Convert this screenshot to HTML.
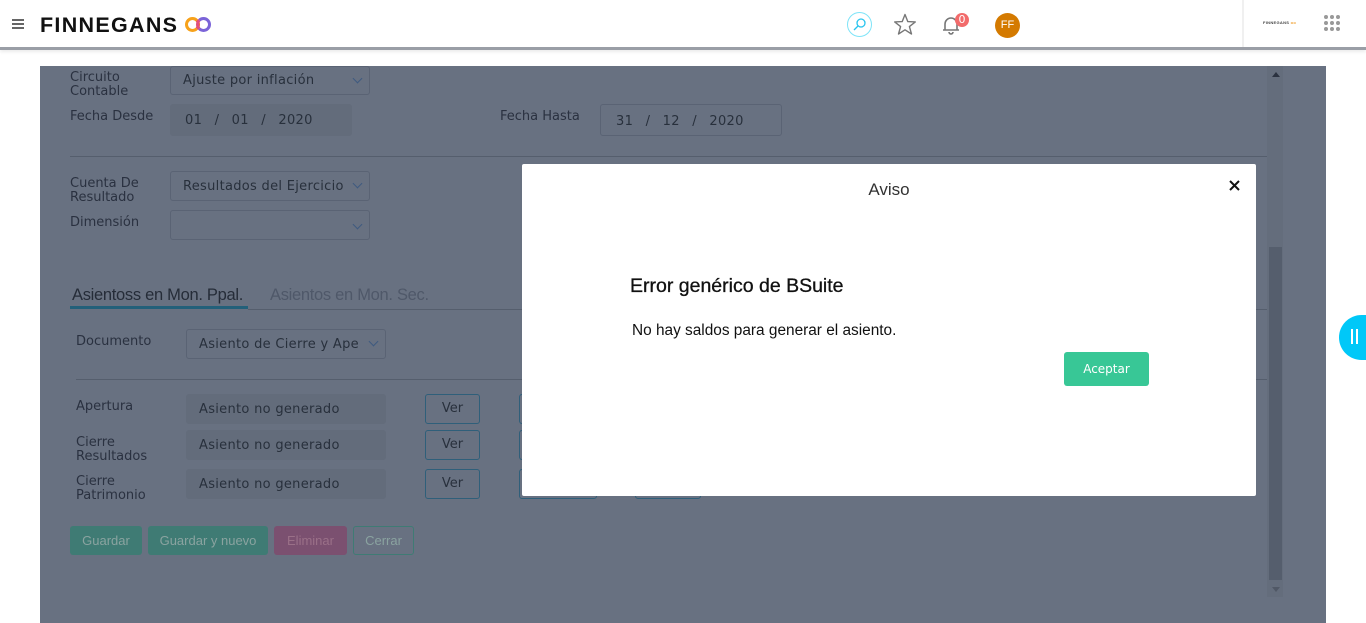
<!DOCTYPE html>
<html><head><meta charset="utf-8"><style>
*{box-sizing:border-box;margin:0;padding:0}
body{width:1366px;height:623px;overflow:hidden;background:#fff;font-family:"DejaVu Sans","Liberation Sans",sans-serif;position:relative}
.a{position:absolute}
.hdr{left:0;top:0;width:1366px;height:50px;background:#fff;border-bottom:3px solid #9a9ea6;box-shadow:0 2px 3px rgba(0,0,0,.08)}
.ov{left:40px;top:66px;width:1286px;height:557px;background:#687181}
.lbl{font-size:13px;color:#2a3140;line-height:14px}
.inp{border:1px solid #5a6374;border-radius:3px;height:30px;font-size:13px;color:#28303c;padding:8px 12px;letter-spacing:.3px}
.fill{background:#636c7b;border:none}
.chev{position:absolute;right:8px;top:8px;width:7px;height:7px;border-right:1.5px solid #3f5a80;border-bottom:1.5px solid #3f5a80;transform:rotate(45deg)}
.ver{border:1.5px solid #2f5f7a;border-radius:3px;width:55px;height:30px;font-size:13px;color:#28303c;text-align:center;line-height:27px}
.btn{height:29px;border-radius:3px;font-size:13px;color:#8aa3a0;text-align:center;line-height:29px;font-family:"Liberation Sans",sans-serif}
.line{height:1px;background:#555e6d}
</style></head><body>
<div class="a hdr">
  <div class="a" style="left:12px;top:19px;width:12px;height:1.5px;background:#666;box-shadow:0 4px 0 #666,0 8px 0 #666"></div>
  <div class="a" style="left:40px;top:12px;font-family:'Liberation Sans',sans-serif;font-weight:bold;font-size:21.5px;letter-spacing:1.3px;color:#111;line-height:26px">FINNEGANS</div>
  <div class="a" style="left:185px;top:17px;width:15px;height:15px;border-radius:50%;border:3.5px solid #f7a21b;border-right-color:#f06a3a"></div>
  <div class="a" style="left:196px;top:17px;width:15px;height:15px;border-radius:50%;border:3.5px solid #7b64d8;border-left-color:#e05080"></div>
  <div class="a" style="left:847px;top:12px;width:25px;height:25px;border-radius:50%;border:1.5px solid #7ee4f8"></div>
  <svg class="a" style="left:851px;top:16px" width="17" height="17" viewBox="0 0 17 17"><circle cx="10" cy="7" r="4" fill="none" stroke="#28c4ee" stroke-width="1.3"/><line x1="7" y1="10" x2="3" y2="14" stroke="#28c4ee" stroke-width="1.3"/></svg>
  <svg class="a" style="left:893px;top:13px" width="24" height="23" viewBox="0 0 24 23"><path d="M12 1.5 L14.8 8.6 L22.3 8.9 L16.4 13.6 L18.5 21 L12 16.8 L5.5 21 L7.6 13.6 L1.7 8.9 L9.2 8.6 Z" fill="none" stroke="#777" stroke-width="1.4" stroke-linejoin="round"/></svg>
  <svg class="a" style="left:940px;top:14px" width="22" height="22" viewBox="0 0 22 22"><path d="M5 16 V10 a6 6 0 0 1 12 0 V16 Z M3 16 H19 M9 18 a2 2 0 0 0 4 0" fill="none" stroke="#777" stroke-width="1.6"/></svg>
  <div class="a" style="left:955px;top:13px;width:14px;height:14px;border-radius:50%;background:#f26b6b;color:#fff;font-size:11px;text-align:center;line-height:14px">0</div>
  <div class="a" style="left:995px;top:13px;width:25px;height:25px;border-radius:50%;background:#d47a00;color:#fff;font-size:11px;text-align:center;line-height:25px;font-family:'Liberation Sans',sans-serif">FF</div>
  <div class="a" style="left:1242px;top:0;width:2px;height:47px;background:#f0f0f0"></div>
  <div class="a" style="left:1263px;top:20px;font-size:4px;font-weight:bold;color:#444;font-family:'Liberation Sans',sans-serif;letter-spacing:.3px">FINNEGANS <span style="color:#f0a030">oo</span></div>
  <svg class="a" style="left:1323px;top:14px" width="18" height="18"><g fill="#999"><circle cx="3" cy="3" r="2"/><circle cx="9" cy="3" r="2"/><circle cx="15" cy="3" r="2"/><circle cx="3" cy="9" r="2"/><circle cx="9" cy="9" r="2"/><circle cx="15" cy="9" r="2"/><circle cx="3" cy="15" r="2"/><circle cx="9" cy="15" r="2"/><circle cx="15" cy="15" r="2"/></g></svg>
</div>

<div class="a ov"></div>
<div class="a" style="left:1267px;top:66px;width:16px;height:531px;background:#646d7c"></div>
<div class="a" style="left:1269px;top:247px;width:13px;height:333px;background:#555e6d"></div>
<div class="a" style="left:1272px;top:72px;width:0;height:0;border-left:4px solid transparent;border-right:4px solid transparent;border-bottom:5px solid #2b3240"></div>
<div class="a" style="left:1272px;top:587px;width:0;height:0;border-left:4px solid transparent;border-right:4px solid transparent;border-top:5px solid #505866"></div>

<div class="a lbl" style="left:70px;top:71px">Circuito<br>Contable</div>
<div class="a inp" style="left:170px;top:66px;width:200px;height:29px;padding-top:6px">Ajuste por inflación<span class="chev"></span></div>
<div class="a lbl" style="left:70px;top:110px">Fecha Desde</div>
<div class="a inp fill" style="left:170px;top:104px;width:182px;height:32px;padding-top:9px;padding-left:15px;word-spacing:8px">01 / 01 / 2020</div>
<div class="a lbl" style="left:500px;top:110px">Fecha Hasta</div>
<div class="a inp" style="left:600px;top:104px;width:182px;height:32px;padding-top:9px;word-spacing:8px;padding-left:15px">31 / 12 / 2020</div>
<div class="a line" style="left:70px;top:156px;width:1197px"></div>
<div class="a lbl" style="left:70px;top:177px">Cuenta De<br>Resultado</div>
<div class="a inp" style="left:170px;top:171px;width:200px;padding-top:7px">Resultados del Ejercicio<span class="chev"></span></div>
<div class="a lbl" style="left:70px;top:216px">Dimensión</div>
<div class="a inp" style="left:170px;top:210px;width:200px"><span class="chev" style="top:10px"></span></div>

<div class="a" style="left:72px;top:286px;font-family:'Liberation Sans',sans-serif;font-size:16.5px;color:#252c38;letter-spacing:-.3px">Asientoss en Mon. Ppal.</div>
<div class="a" style="left:70px;top:306px;width:178px;height:3px;background:#23607a"></div>
<div class="a" style="left:270px;top:286px;font-family:'Liberation Sans',sans-serif;font-size:16.5px;color:#4f5869;letter-spacing:-.3px">Asientos en Mon. Sec.</div>
<div class="a line" style="left:248px;top:309px;width:1019px"></div>

<div class="a lbl" style="left:76px;top:335px">Documento</div>
<div class="a inp" style="left:186px;top:329px;width:200px;padding-top:7px">Asiento de Cierre y Ape<span class="chev"></span></div>
<div class="a line" style="left:76px;top:379px;width:1191px"></div>

<div class="a lbl" style="left:76px;top:400px">Apertura</div>
<div class="a inp fill" style="left:186px;top:394px;width:200px;height:30px;padding-left:13px">Asiento no generado</div>
<div class="a ver" style="left:425px;top:394px">Ver</div>
<div class="a lbl" style="left:76px;top:436px">Cierre<br>Resultados</div>
<div class="a inp fill" style="left:186px;top:430px;width:200px;height:30px;padding-left:13px">Asiento no generado</div>
<div class="a ver" style="left:425px;top:430px">Ver</div>
<div class="a lbl" style="left:76px;top:475px">Cierre<br>Patrimonio</div>
<div class="a inp fill" style="left:186px;top:469px;width:200px;height:30px;padding-left:13px">Asiento no generado</div>
<div class="a ver" style="left:425px;top:469px">Ver</div>
<div class="a ver" style="left:519px;top:394px;width:78px"></div>
<div class="a ver" style="left:519px;top:430px;width:78px"></div>
<div class="a ver" style="left:519px;top:469px;width:78px"></div>
<div class="a ver" style="left:635px;top:469px;width:66px"></div>

<div class="a btn" style="left:70px;top:526px;width:72px;background:#3f7b74">Guardar</div>
<div class="a btn" style="left:148px;top:526px;width:120px;background:#3f7b74">Guardar y nuevo</div>
<div class="a btn" style="left:274px;top:526px;width:73px;background:#7b5070;color:#9a7088">Eliminar</div>
<div class="a btn" style="left:353px;top:526px;width:61px;border:1px solid #3f7b74;line-height:27px">Cerrar</div>

<div class="a" style="left:522px;top:164px;width:734px;height:332px;background:#fff;border-radius:2px">
  <div class="a" style="left:0;top:16px;width:734px;text-align:center;font-family:'Liberation Sans',sans-serif;font-size:17px;color:#333">Aviso</div>
  <svg class="a" style="left:707px;top:16px" width="11" height="11" viewBox="0 0 11 11"><path d="M1 1 L10 10 M10 1 L1 10" stroke="#111" stroke-width="2"/></svg>
  <div class="a" style="left:108px;top:111px;font-family:'Liberation Sans',sans-serif;font-size:19.5px;color:#111;-webkit-text-stroke:.3px #111">Error genérico de BSuite</div>
  <div class="a" style="left:110px;top:158px;font-family:'Liberation Sans',sans-serif;font-size:15.4px;color:#111">No hay saldos para generar el asiento.</div>
  <div class="a" style="left:542px;top:188px;width:85px;height:34px;background:#38c796;border-radius:3px;color:#fff;font-size:12px;text-align:center;line-height:34px">Aceptar</div>
</div>

<div class="a" style="left:1339px;top:315px;width:50px;height:45px;border-radius:23px;background:#00c8f8"></div>
<div class="a" style="left:1351px;top:329px;width:1.5px;height:15px;background:#fff;box-shadow:5px 0 0 #fff"></div>
</body></html>
